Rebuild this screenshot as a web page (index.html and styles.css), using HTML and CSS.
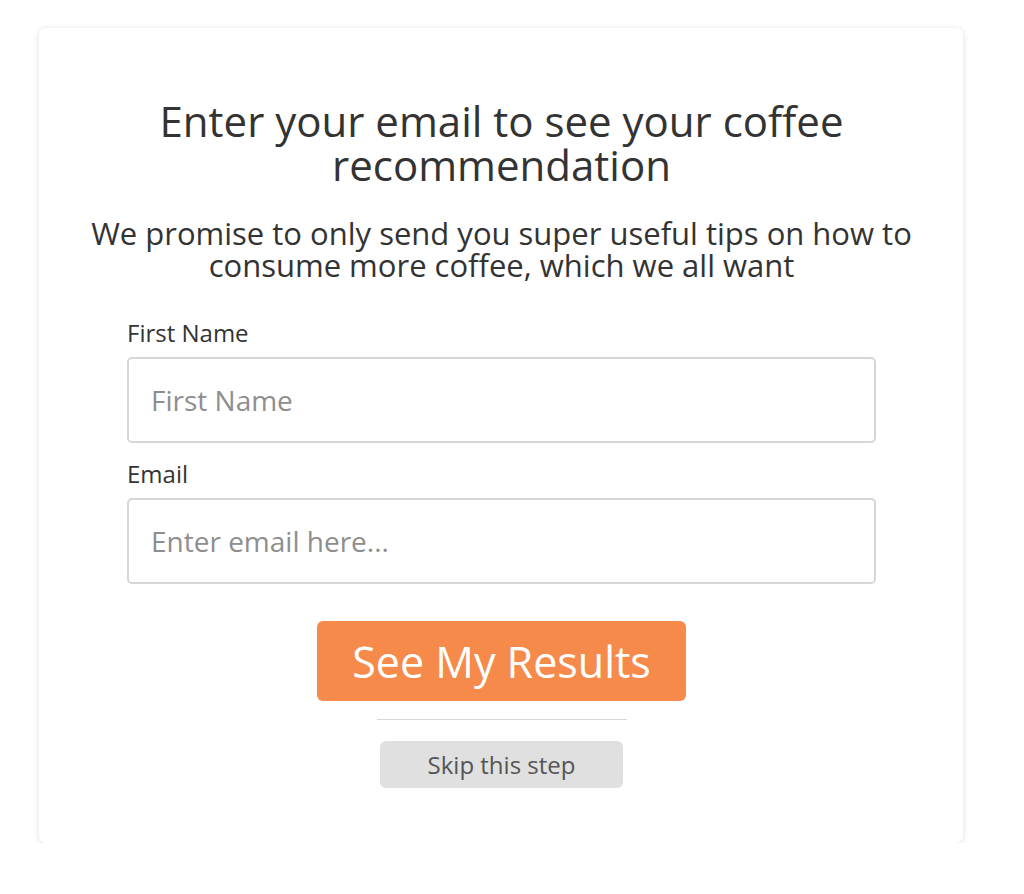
FILE: index.html
```html
<!DOCTYPE html>
<html>
<head>
<meta charset="utf-8">
<link rel="stylesheet" href="styles.css">
</head>
<body>
<div class="card">
  <h1 class="title">Enter your email to see your coffee recommendation</h1>
  <p class="subtitle">We promise to only send you super useful tips on how to consume more coffee, which we all want</p>
  <form class="form">
    <label class="label" for="fn">First Name</label>
    <input class="input" id="fn" type="text" placeholder="First Name">
    <label class="label" for="em">Email</label>
    <input class="input" id="em" type="email" placeholder="Enter email here...">
    <div class="actions">
      <button class="primary" type="button">See My Results</button>
      <hr class="divider">
      <button class="skip" type="button">Skip this step</button>
    </div>
  </form>
</div>
</body>
</html>
```
FILE: styles.css
```css
html, body {
  margin: 0;
  padding: 0;
  background: #fff;
}
body {
  font-family: "Open Sans", Lato, sans-serif;
  color: #333;
  padding-top: 28px;
}
.card {
  box-sizing: border-box;
  width: 924px;
  margin-left: 39px;
  height: 815px;
  background: #fff;
  border-radius: 7px;
  box-shadow: 0 1px 6px rgba(0,0,0,0.13);
  padding: 71px 87px 0 88px;
  display: flex;
  flex-direction: column;
  align-items: center;
}
.title {
  margin: 0;
  font-weight: 400;
  font-size: 42px;
  line-height: 44px;
  text-align: center;
  color: #333;
  width: 720px;
}
.subtitle {
  margin: 30px 0 0;
  font-size: 31px;
  line-height: 32px;
  text-align: center;
  color: #333;
  width: 840px;
}
.form {
  width: 100%;
  margin-top: 38px;
  display: flex;
  flex-direction: column;
}
.label {
  font-size: 24px;
  line-height: 28px;
  color: #333;
  margin-bottom: 10px;
}
.input {
  box-sizing: border-box;
  height: 86px;
  border: 2px solid #d6d6d6;
  border-radius: 5px;
  padding: 0 22px;
  font-family: inherit;
  font-size: 28px;
  color: #333;
  margin-bottom: 17px;
  outline: none;
}
.input::placeholder {
  color: #8e8e8e;
}
.actions {
  display: flex;
  flex-direction: column;
  align-items: center;
  margin-top: 20px;
}
.primary {
  width: 369px;
  height: 80px;
  background: #f58a4b;
  border: none;
  border-radius: 6px;
  color: #fff;
  font-family: inherit;
  font-size: 43px;
  padding: 0;
  cursor: pointer;
}
.divider {
  width: 250px;
  border: none;
  border-top: 1px solid #d8d8d8;
  margin: 18px 0 21px;
}
.skip {
  width: 243px;
  height: 47px;
  background: #e0e0e0;
  border: none;
  border-radius: 6px;
  color: #555;
  font-family: inherit;
  font-size: 24px;
  padding: 0;
  cursor: pointer;
}
```
